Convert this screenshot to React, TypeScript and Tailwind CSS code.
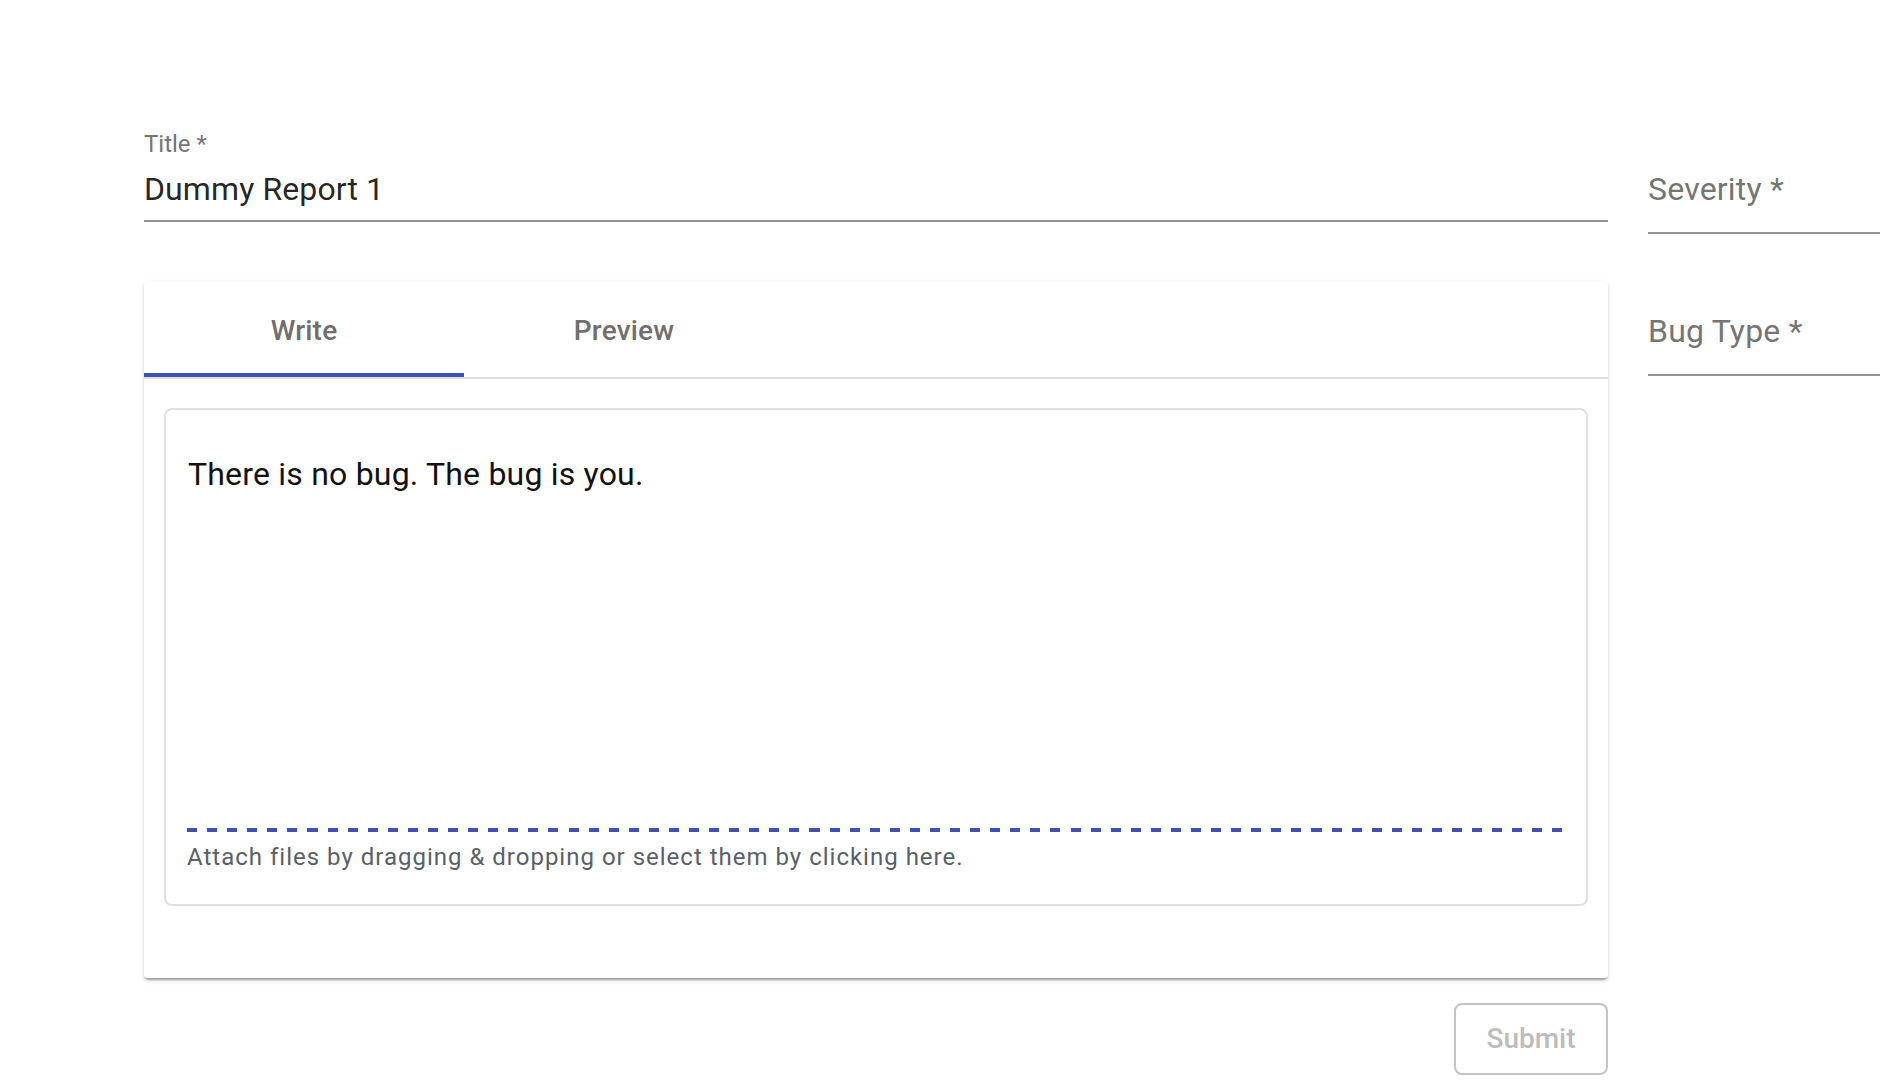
import React from "react";

export default function App() {
  return (
    <div className="w-[1880px] h-[1090px] overflow-hidden bg-white font-['Roboto',sans-serif]">
      <div className="flex gap-[40px] pl-[144px] pt-[132px]">
        {/* Left column */}
        <div className="w-[1464px] shrink-0 flex flex-col">
          {/* Title field */}
          <div className="border-b-2 border-[#949494] pb-[12px]">
            <div className="text-[24px] leading-[24px] text-[#757575]">Title *</div>
            <div className="mt-[14px] text-[32px] leading-[38px] tracking-[0.1px] text-[rgba(0,0,0,0.87)]">
              Dummy Report 1
            </div>
          </div>

          {/* Card */}
          <div className="mt-[60px] bg-white rounded-[4px] shadow-[0px_4px_2px_-2px_rgba(0,0,0,0.2),0px_2px_2px_0px_rgba(0,0,0,0.14),0px_2px_6px_0px_rgba(0,0,0,0.12)] pb-[72px]">
            <div className="flex h-[95px] border-b-2 border-[#e0e0e0] box-content">
              <div className="relative w-[320px] flex items-center justify-center pt-[2px] text-[28px] font-medium tracking-[0.2px] text-[#6f6f6f]">
                Write
                <div className="absolute left-0 right-0 bottom-0 h-[4px] bg-[#3f51b5]" />
              </div>
              <div className="w-[320px] flex items-center justify-center pt-[2px] text-[28px] font-medium tracking-[0.2px] text-[#6f6f6f]">
                Preview
              </div>
            </div>

            {/* Editor box */}
            <div className="mt-[29px] mx-[20px] border-2 border-[#e0e0e0] rounded-[8px] flex flex-col">
              <div className="h-[418px] pt-[40px] px-[22px]">
                <div className="text-[32px] leading-[48px] tracking-[0.2px] text-[#111111]">
                  There is no bug. The bug is you.
                </div>
              </div>
              <div className="px-[21px] pb-[29px]">
                <div className="w-[1376px] h-[4px] bg-[repeating-linear-gradient(90deg,#3f51b5_0px,#3f51b5_10.04px,transparent_10.04px,transparent_20.08px)]" />
                <div className="mt-[7px] text-[24px] leading-[36px] tracking-[1px] text-[#586069]">
                  Attach files by dragging &amp; dropping or select them by clicking here.
                </div>
              </div>
            </div>
          </div>

          {/* Submit */}
          <div className="mt-[25px] flex justify-end">
            <div className="w-[154px] h-[72px] border-2 border-[#c4c4c4] rounded-[8px] flex items-center justify-center text-[28px] font-medium tracking-[0px] text-[#bdbdbd]">
              Submit
            </div>
          </div>
        </div>

        {/* Right column */}
        <div className="w-[500px] shrink-0 pt-[38px] flex flex-col">
          <div className="border-b-2 border-[#949494] pb-[24px]">
            <div className="text-[32px] leading-[38px] tracking-[0.2px] text-[#757575]">Severity *</div>
          </div>
          <div className="mt-[78px] border-b-2 border-[#949494] pb-[24px]">
            <div className="text-[32px] leading-[38px] tracking-[0.2px] text-[#757575]">Bug Type *</div>
          </div>
        </div>
      </div>
    </div>
  );
}
